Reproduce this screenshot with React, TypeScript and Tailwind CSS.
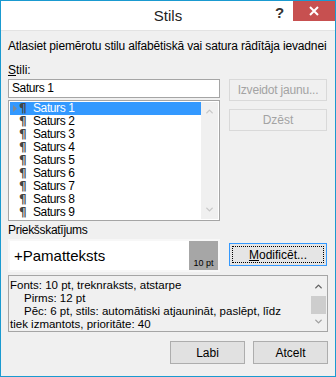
import { ChevronUp, ChevronDown } from 'lucide-react';

const styles = ['Saturs 1', 'Saturs 2', 'Saturs 3', 'Saturs 4', 'Saturs 5', 'Saturs 6', 'Saturs 7', 'Saturs 8', 'Saturs 9'];

const font = { fontFamily: '"Liberation Sans", Arial, sans-serif' };

export default function App() {
  return (
    <div className="w-[336px] h-[377px] border border-[#1a9ad0] bg-[#f0f0f0] flex flex-col text-[12px] text-black overflow-hidden" style={font}>
      {/* Title bar */}
      <div className="h-[30px] bg-white flex items-start border-b border-[#e3e3e3] shrink-0">
        <div className="flex-1 pl-[60px] pt-[6px] text-center text-[15px] leading-[18px] text-[#222]">Stils</div>
        <div className="w-[8px] pt-[3px] text-[15px] font-bold leading-[18px] text-[#333] mr-[10px]">?</div>
        <div className="w-[42px] h-[20px] bg-[#c75050] flex items-center justify-center">
          <svg width="10" height="10" viewBox="0 0 10 10">
            <path d="M1 1 L9 9 M9 1 L1 9" stroke="white" strokeWidth="2" />
          </svg>
        </div>
      </div>

      <div className="px-[7px] pt-[7px]">
        <div className="h-[16px] leading-[16px] whitespace-nowrap tracking-[-0.15px]">Atlasiet piemērotu stilu alfabētiskā vai satura rādītāja ievadnei</div>
        <div className="mt-[8px] h-[16px] leading-[16px]"><span className="underline">S</span>tili:</div>

        <div className="flex gap-[9px] mt-[1px]">
          <div className="w-[212px] flex flex-col">
            <div className="h-[19px] border border-[#a5a5a5] bg-white px-[3px] leading-[17px] tracking-[-0.4px]">Saturs 1</div>
            <div className="mt-[2px] h-[121px] border border-[#a5a5a5] bg-white flex p-[1px]">
              <div className="flex-1 flex flex-col">
                {styles.map((s, i) => (
                  <div key={s} className={`h-[13px] shrink-0 flex items-center ${i === 0 ? 'bg-[#3399ff] text-white' : ''}`}>
                    <span className="w-[8px] pl-[3px] flex items-center">
                      {i === 0 && (
                        <svg width="4" height="7" viewBox="0 0 4 7"><path d="M0 0 L4 3.5 L0 7 Z" fill="#7a8a9a" /></svg>
                      )}
                    </span>
                    <span className="w-[15px] pl-[1px] text-[#444] font-bold text-[12px] leading-[13px]" style={{ fontFamily: '"DejaVu Sans", sans-serif' }}>¶</span>
                    <span className="leading-[13px] tracking-[-0.4px]">{s}</span>
                  </div>
                ))}
              </div>
              <div className="w-[17px] flex flex-col justify-between items-center text-[#c8c8c8] py-[4px] bg-[#f0f0f0]">
                <ChevronUp size={11} strokeWidth={3} />
                <ChevronDown size={11} strokeWidth={3} />
              </div>
            </div>
          </div>
          <div className="flex flex-col gap-[8px]">
            <div className="w-[98px] h-[22px] border border-[#d9d9d9] text-[#a3a3a3] flex items-center justify-center tracking-[-0.2px]">Izveidot jaunu...</div>
            <div className="w-[98px] h-[22px] border border-[#d9d9d9] text-[#a3a3a3] flex items-center justify-center">Dzēst</div>
          </div>
        </div>

        <div className="mt-[1px] h-[16px] leading-[16px] tracking-[-0.3px]">Priekšskatījums</div>
        <div className="flex mt-[1px] items-start gap-[9px]">
          <div className="w-[212px] h-[33px] bg-white border-2 border-[#f7f7f7] flex">
            <div className="flex-1 text-[15px] leading-[20px] pl-[4px] pt-[5px] bg-white">+Pamatteksts</div>
            <div className="w-[29px] bg-[#a6a6a6] flex items-end justify-center text-[9px] leading-[12px] pb-[1px]">10 pt</div>
          </div>
          <div className="mt-[4px] w-[98px] h-[23px] border border-[#3399ff] bg-[#e5e5e5] p-[2px]">
            <div className="h-full border border-dotted border-black flex items-center justify-center">
              <span><span className="underline">M</span>odificēt...</span>
            </div>
          </div>
        </div>

        <div className="mt-[3px] h-[57px] border border-[#a5a5a5] flex">
          <div className="flex-1 pl-[1px] pt-[3px] text-[11.5px] leading-[13px] whitespace-nowrap">
            <div>Fonts: 10 pt, treknraksts, atstarpe</div>
            <div className="pl-[14px]">Pirms: 12 pt</div>
            <div className="pl-[14px]">Pēc: 6 pt, stils: automātiski atjaunināt, paslēpt, līdz</div>
            <div>tiek izmantots, prioritāte: 40</div>
          </div>
          <div className="w-[17px] flex flex-col items-center">
            <ChevronUp size={11} strokeWidth={3} className="text-[#606060] mt-[5px]" />
            <div className="w-[15px] h-[18px] bg-[#cdcdcd] mt-[4px]" />
            <ChevronDown size={11} strokeWidth={3} className="text-[#a0a0a0] mt-auto mb-[4px]" />
          </div>
        </div>

        <div className="flex justify-end gap-[8px] mt-[9px]">
          <div className="w-[75px] h-[23px] border border-[#adadad] bg-[#e1e1e1] flex items-center justify-center">Labi</div>
          <div className="w-[75px] h-[23px] border border-[#adadad] bg-[#e1e1e1] flex items-center justify-center">Atcelt</div>
        </div>
      </div>
    </div>
  );
}
